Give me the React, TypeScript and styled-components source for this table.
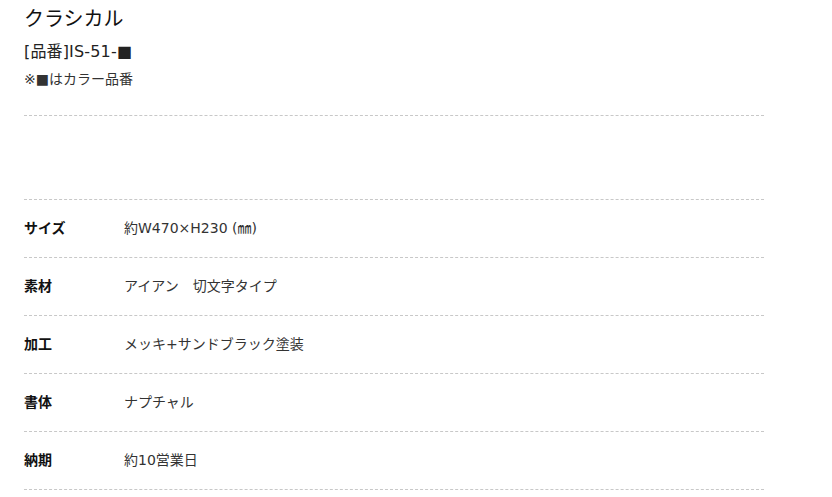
import React from 'react'
import styled, { createGlobalStyle } from 'styled-components'

const GlobalStyle = createGlobalStyle`
  body {
    margin: 0;
    background: #fff;
    font-family: "DejaVu Sans", "Noto Sans CJK JP", sans-serif;
    color: #333;
  }
`

const Wrapper = styled.div`
  width: 740px;
  padding: 0 0 0 24px;
`

const Title = styled.h1`
  margin: 0;
  padding-top: 4px;
  font-size: 20px;
  font-weight: 400;
  line-height: 30px;
  color: #111;
`

const ItemCode = styled.p`
  margin: 6px 0 0;
  font-size: 16px;
  font-weight: 400;
  line-height: 24px;
  letter-spacing: 0.01em;
  color: #222;
`

const Note = styled.p`
  margin: 5px 0 0;
  font-size: 14px;
  line-height: 20px;
  color: #333;
`

const Spacer = styled.div`
  margin-top: 26px;
  height: 83px;
  border-top: 1px dashed #c8c8c8;
`

const SpecList = styled.dl`
  margin: 0;
`

const SpecRow = styled.div`
  display: flex;
  align-items: center;
  box-sizing: border-box;
  height: 58px;
  padding-bottom: 3px;
  border-top: 1px dashed #c8c8c8;
  &:last-child {
    height: 59px;
    border-bottom: 1px dashed #c8c8c8;
  }
`

const Label = styled.dt`
  width: 100px;
  font-size: 14px;
  font-weight: 700;
  color: #111;
`

const Value = styled.dd`
  margin: 0;
  font-size: 14px;
  color: #333;
`

const specs = [
  ['サイズ', '約W470×H230 (㎜)'],
  ['素材', 'アイアン　切文字タイプ'],
  ['加工', 'メッキ+サンドブラック塗装'],
  ['書体', 'ナプチャル'],
  ['納期', '約10営業日'],
]

export default function App() {
  return (
    <Wrapper>
      <GlobalStyle />
      <Title>クラシカル</Title>
      <ItemCode>[品番]IS-51-■</ItemCode>
      <Note>※■はカラー品番</Note>
      <Spacer />
      <SpecList>
        {specs.map(([label, value]) => (
          <SpecRow key={label}>
            <Label>{label}</Label>
            <Value>{value}</Value>
          </SpecRow>
        ))}
      </SpecList>
    </Wrapper>
  )
}
